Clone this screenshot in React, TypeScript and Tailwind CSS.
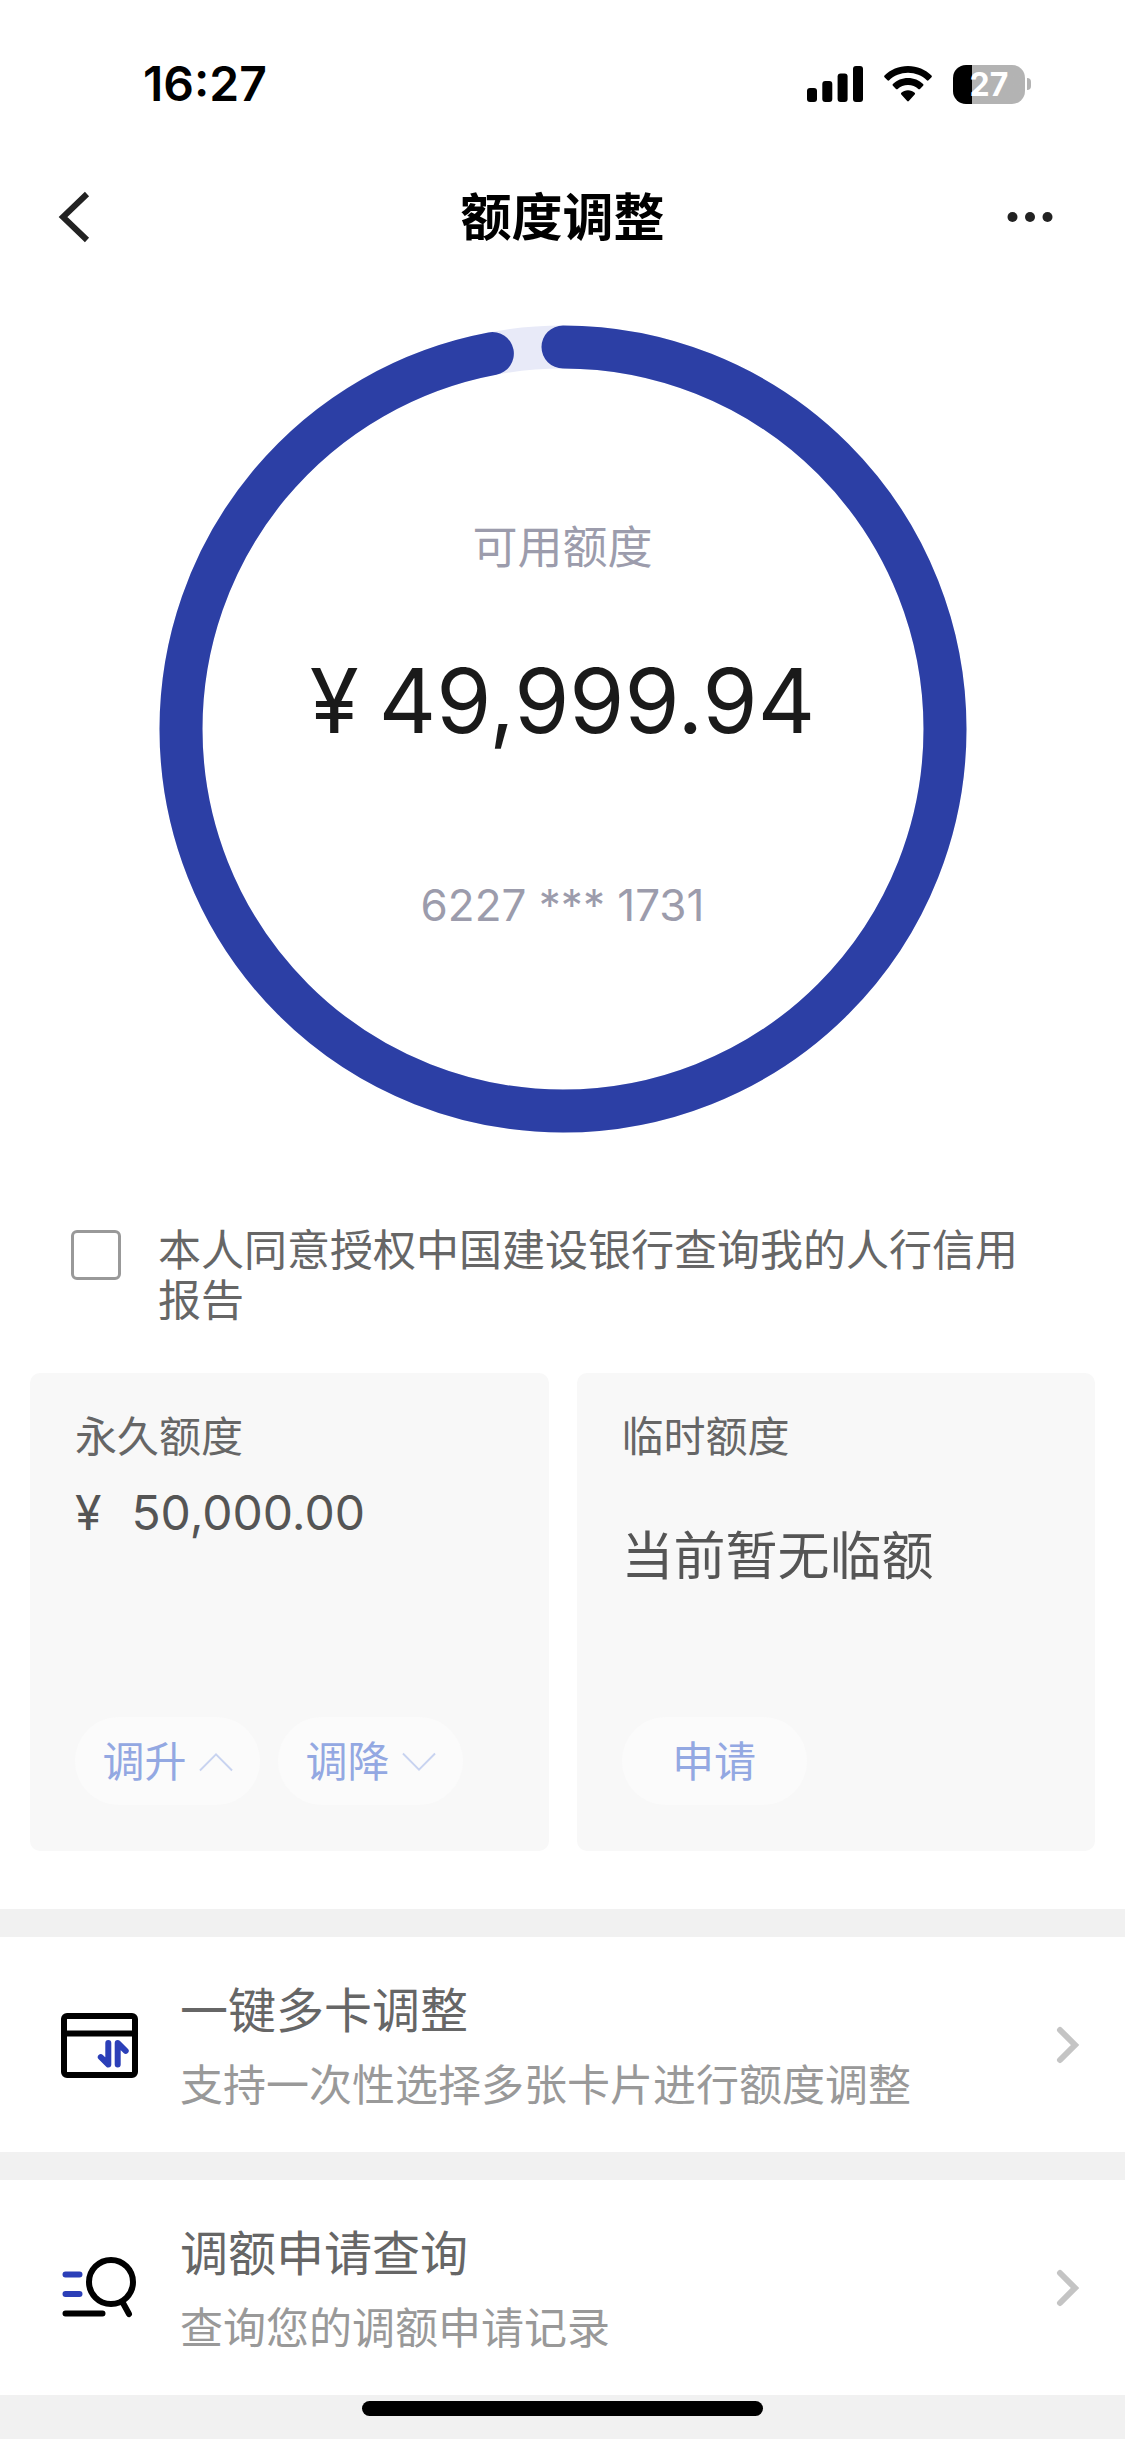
import React, { useState } from 'react';

interface MenuRowProps {
  icon: React.ReactNode;
  title: string;
  description: string;
}

const USED_RATIO = 0.97;
const RADIUS = 382;

const StatusBar: React.FC = () => (
  <div className="flex h-[150px] items-center justify-between pt-[18px] pr-[94px] pl-[143px]">
    <span className="text-[48px] leading-[60px] font-semibold text-black">16:27</span>
    <div className="flex items-center gap-[21px]">
      <svg width="56" height="40" viewBox="0 0 56 40" fill="#000">
        <rect x="0" y="24" width="10" height="14" rx="3" />
        <rect x="15.3" y="17" width="10" height="21" rx="3" />
        <rect x="30.6" y="9.500" width="10" height="28.500" rx="3" />
        <rect x="46" y="2" width="10" height="36" rx="3" />
      </svg>
      <svg width="48" height="40" viewBox="0 0 48 40" fill="#000">
        <path d="M24 2C14.800 2 6.400 5.700 .5 11.600c-.5.500-.5 1.200 0 1.700l3 3c.5.500 1.200.500 1.700 0C10 11.600 16.700 8.800 24 8.800s14 2.800 18.800 7.500c.5.500 1.200.500 1.700 0l3-3c.5-.5.5-1.200 0-1.700C41.600 5.700 33.200 2 24 2Z" />
        <path d="M24 14c-5.900 0-11.200 2.300-15.100 6.100-.5.500-.5 1.200 0 1.700l3.100 3.100c.5.500 1.200.500 1.700 0C16.400 22.400 20 20.900 24 20.900s7.600 1.500 10.300 4c.5.500 1.200.500 1.700 0l3.100-3.100c.5-.5.5-1.200 0-1.700C35.200 16.300 29.900 14 24 14Z" />
        <path d="M24 26.200c-2.600 0-4.900.9-6.700 2.500-.5.500-.5 1.200 0 1.700l5.900 6.600c.4.500 1.200.500 1.600 0l5.900-6.600c.5-.5.5-1.200 0-1.700-1.800-1.600-4.100-2.500-6.700-2.500Z" />
      </svg>
      <div className="flex items-center gap-[2px]">
        <div className="flex h-[39px] w-[72px] items-center justify-center rounded-[13px] bg-linear-to-r from-black from-27% to-[#b3b3b3] to-27% text-[32px] leading-[39px] font-bold text-white">
          27
        </div>
        <div className="h-[12px] w-[4px] rounded-r-full bg-[#b3b3b3]" />
      </div>
    </div>
  </div>
);

const NavBar: React.FC = () => (
  <header className="flex h-[134px] items-center justify-between px-[56px]">
    <button type="button" aria-label="返回" className="flex w-[64px] justify-start">
      <svg width="36" height="54" viewBox="0 0 36 54" fill="none" stroke="#222" strokeWidth="6">
        <path d="M31 4 7 27l24 23" />
      </svg>
    </button>
    <h1 className="pt-[2px] text-[51px] leading-[72px] font-bold text-black">额度调整</h1>
    <button type="button" aria-label="更多" className="flex w-[64px] justify-end">
      <svg width="64" height="54" viewBox="0 0 64 54" fill="#222">
        <circle cx="7.500" cy="27" r="5" />
        <circle cx="25" cy="27" r="5" />
        <circle cx="42.500" cy="27" r="5" />
      </svg>
    </button>
  </header>
);

const LimitRing: React.FC = () => {
  const length = 2 * Math.PI * RADIUS;
  return (
    <section className="mx-auto mt-[40px] grid aspect-square w-[72%]">
      <svg viewBox="0 0 810 810" fill="none" strokeWidth="43" className="h-full w-full [grid-area:1/1]">
        <circle cx="405" cy="405" r={RADIUS} stroke="#e8eaf8" />
        <circle
          cx="405"
          cy="405"
          r={RADIUS}
          stroke="#2c3fa5"
          strokeLinecap="round"
          strokeDasharray={`${length * USED_RATIO} ${length}`}
          transform="rotate(-90 405 405)"
        />
      </svg>
      <div className="flex flex-col items-center pt-[194px] [grid-area:1/1]">
        <p className="text-[45px] leading-[60px] text-[#9c9cac]">可用额度</p>
        <p className="mt-[63px] flex items-baseline gap-[20px] text-[89px] leading-[120px] text-[#1a1a1a]">
          <span>¥</span>
          <span>49,999.94</span>
        </p>
        <p className="mt-[114px] text-[44px] leading-[60px] text-[#9c9cac]">6227 *** 1731</p>
      </div>
    </section>
  );
};

const PillButton: React.FC<{ children: React.ReactNode }> = ({ children }) => (
  <button
    type="button"
    className="flex h-[88px] w-[185px] items-center justify-center gap-[12px] rounded-full bg-[#fbfbfb] pt-[2px] text-[42px] leading-[60px] text-[#93a8e2]"
  >
    {children}
  </button>
);

const MenuRow: React.FC<MenuRowProps> = ({ icon, title, description }) => (
  <a href="#" className="flex h-[215px] items-center bg-white pr-[45px] pl-[60px]">
    {icon}
    <div className="ml-[40px] flex-1 pt-[6px]">
      <h2 className="text-[48px] leading-[75px] text-[#666]">{title}</h2>
      <p className="text-[43px] leading-[75px] text-[#999]">{description}</p>
    </div>
    <svg width="25" height="40" viewBox="0 0 25 40" fill="none" stroke="#c4c4c4" strokeWidth="6" strokeLinecap="round">
      <path d="M5 5l15 15L5 35" />
    </svg>
  </a>
);

const CardIcon: React.FC = () => (
  <svg width="80" height="80" viewBox="0 0 80 80" fill="none" strokeWidth="6" strokeLinecap="round" strokeLinejoin="round">
    <rect x="4" y="11" width="71" height="59" rx="3" stroke="#000" />
    <path d="M4 28.500h71" stroke="#000" />
    <path d="M48.300 38v21.500l-7.500-7.300M57.700 59.500V38l8 7.800" stroke="#2b3fb8" />
  </svg>
);

const QueryIcon: React.FC = () => (
  <svg width="80" height="80" viewBox="0 0 80 80" fill="none" strokeWidth="6" strokeLinecap="round">
    <circle cx="51" cy="34" r="22" stroke="#000" />
    <path d="M63 55l6 11M5.500 65.500h37" stroke="#000" />
    <path d="M5.500 26.500h14M5.500 46h14" stroke="#2b3fb8" />
  </svg>
);

export default function App() {
  const [agreed, setAgreed] = useState(false);

  return (
    <div className="min-h-screen bg-[#f1f1f1] font-['Inter','Noto_Sans_CJK_SC',sans-serif]">
      <div className="bg-white pb-[58px]">
        <StatusBar />
        <NavBar />
        <LimitRing />

        <div className="mt-[91px] flex items-start gap-[37px] px-[71px]">
          <input
            id="agree"
            type="checkbox"
            checked={agreed}
            onChange={e => setAgreed(e.target.checked)}
            className="mt-[5px] h-[50px] w-[50px] shrink-0 appearance-none rounded-[6px] border-3 border-[#999] bg-white checked:bg-[#2c3fa5]"
          />
          <label htmlFor="agree" className="text-[43px] leading-[50px] text-[#666]">
            本人同意授权中国建设银行查询我的人行信用报告
          </label>
        </div>

        <div className="mt-[48px] grid grid-cols-2 gap-[28px] px-[30px]">
          <section className="flex min-h-[478px] flex-col rounded-[10px] bg-[#f8f8f8] px-[45px] pt-[34px] pb-[46px]">
            <h2 className="text-[42px] leading-[60px] text-[#666]">永久额度</h2>
            <p className="mt-[16px] flex items-baseline gap-[30px] text-[48px] leading-[60px] text-[#555]">
              <span>¥</span>
              <span>50,000.00</span>
            </p>
            <div className="mt-auto flex gap-[18px]">
              <PillButton>
                调升
                <svg width="34" height="20" viewBox="0 0 36 20" fill="none" stroke="#c8d3f0" strokeWidth="2">
                  <path d="M1 19 18 2l17 17" />
                </svg>
              </PillButton>
              <PillButton>
                调降
                <svg width="34" height="20" viewBox="0 0 36 20" fill="none" stroke="#c8d3f0" strokeWidth="2">
                  <path d="M1 1l17 17L35 1" />
                </svg>
              </PillButton>
            </div>
          </section>

          <section className="flex min-h-[478px] flex-col rounded-[10px] bg-[#f8f8f8] px-[45px] pt-[34px] pb-[46px]">
            <h2 className="text-[42px] leading-[60px] text-[#666]">临时额度</h2>
            <p className="mt-[60px] text-[52px] leading-[60px] text-[#555]">当前暂无临额</p>
            <div className="mt-auto flex">
              <PillButton>申请</PillButton>
            </div>
          </section>
        </div>
      </div>

      <nav className="mt-[28px] flex flex-col gap-[28px]">
        <MenuRow icon={<CardIcon />} title="一键多卡调整" description="支持一次性选择多张卡片进行额度调整" />
        <MenuRow icon={<QueryIcon />} title="调额申请查询" description="查询您的调额申请记录" />
      </nav>

      <div className="flex justify-center pt-[6px] pb-[22px]">
        <div className="h-[15px] w-[401px] rounded-full bg-black" />
      </div>
    </div>
  );
}
